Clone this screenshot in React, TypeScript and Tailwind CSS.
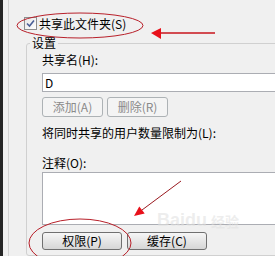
import React from "react";

const DisabledButton = ({ label }: { label: string }) => (
  <div className="w-[61px] h-[20px] flex items-center justify-center rounded-[3px] border border-[#adb2b5] bg-[#f4f4f4] text-[#8a8a8a]">
    {label}
  </div>
);

const NormalButton = ({ label }: { label: string }) => (
  <div className="w-[80px] h-[18px] flex items-center justify-center rounded-[3px] border border-[#707070] bg-gradient-to-b from-[#f6f6f6] to-[#d6d6d6] text-black">
    {label}
  </div>
);

const Marks = () => (
  <svg
    className="absolute inset-0 pointer-events-none"
    width={275}
    height={256}
    viewBox="0 0 275 256"
  >
    <ellipse cx={80} cy={25.5} rx={63} ry={12.5} fill="none" stroke="#b8202a" strokeWidth={1} />
    <ellipse cx={80} cy={243} rx={51} ry={24} fill="none" stroke="#b8202a" strokeWidth={1} />
    <line x1={215} y1={33} x2={160} y2={33} stroke="#c8141c" strokeWidth={1.5} />
    <polygon points="151,33 161,28 161,39" fill="#e8101a" />
    <line x1={181} y1={181} x2={142} y2={210} stroke="#9a1a20" strokeWidth={1} />
    <polygon points="134,216 144.7,213.6 139.3,206.4" fill="#e8101a" />
  </svg>
);

export default function App() {
  return (
    <div className="relative w-[275px] h-[256px] overflow-hidden flex bg-[#f0f0f0] text-[12px] leading-[16px] text-black font-['Noto_Sans_CJK_SC','Noto_Sans',sans-serif]">
      <div className="w-[3px] shrink-0 bg-[#262626]" />
      <div className="w-[5px] shrink-0" />
      <div className="w-px shrink-0 bg-[#d3d3d3]" />
      <div className="flex-1 flex flex-col pl-[15px]">
        <div className="mt-[17px] h-[13px] flex items-center gap-[2px]">
          <div className="w-[13px] h-[13px] flex items-center justify-center border border-[#8f8f8f] bg-gradient-to-br from-[#e6e6e6] to-white">
            <svg width="9" height="9" viewBox="0 0 9 9">
              <path d="M1 4.5 L3.5 7 L8 1.5" fill="none" stroke="#4a5f97" strokeWidth={1.6} />
            </svg>
          </div>
          <span>共享此文件夹(S)</span>
        </div>
        <fieldset className="mt-[5px] ml-[2px] w-[300px] h-[260px] rounded-[3px] border border-[#d0d0d0] p-0">
          <legend className="ml-[3px] px-[2px] leading-[16px]">设置</legend>
          <div className="flex flex-col pl-[15px]">
            <div className="mt-[1px]">共享名(H):</div>
            <div className="mt-[5px] h-[19px] border border-[#abadb3] bg-white pl-[2px] flex items-center">D</div>
            <div className="mt-[5px] flex gap-[4px]">
              <DisabledButton label="添加(A)" />
              <DisabledButton label="删除(R)" />
            </div>
            <div className="mt-[8px]">将同时共享的用户数量限制为(L):</div>
            <div className="mt-[14px]">注释(O):</div>
            <div className="mt-[1px] h-[53px] border border-[#abadb3] bg-white" />
            <div className="mt-[7px] flex gap-[5px]">
              <NormalButton label="权限(P)" />
              <NormalButton label="缓存(C)" />
            </div>
          </div>
        </fieldset>
      </div>
      <div className="absolute left-[157px] top-[211px] flex items-end gap-[4px] text-[#e2e2e2]/60 font-bold">
        <span className="text-[18px] leading-[18px] font-['Liberation_Sans',sans-serif]">Baidu</span>
        <span className="text-[14px] leading-[16px] font-['Noto_Sans_CJK_SC',sans-serif]">经验</span>
      </div>
      <Marks />
    </div>
  );
}
